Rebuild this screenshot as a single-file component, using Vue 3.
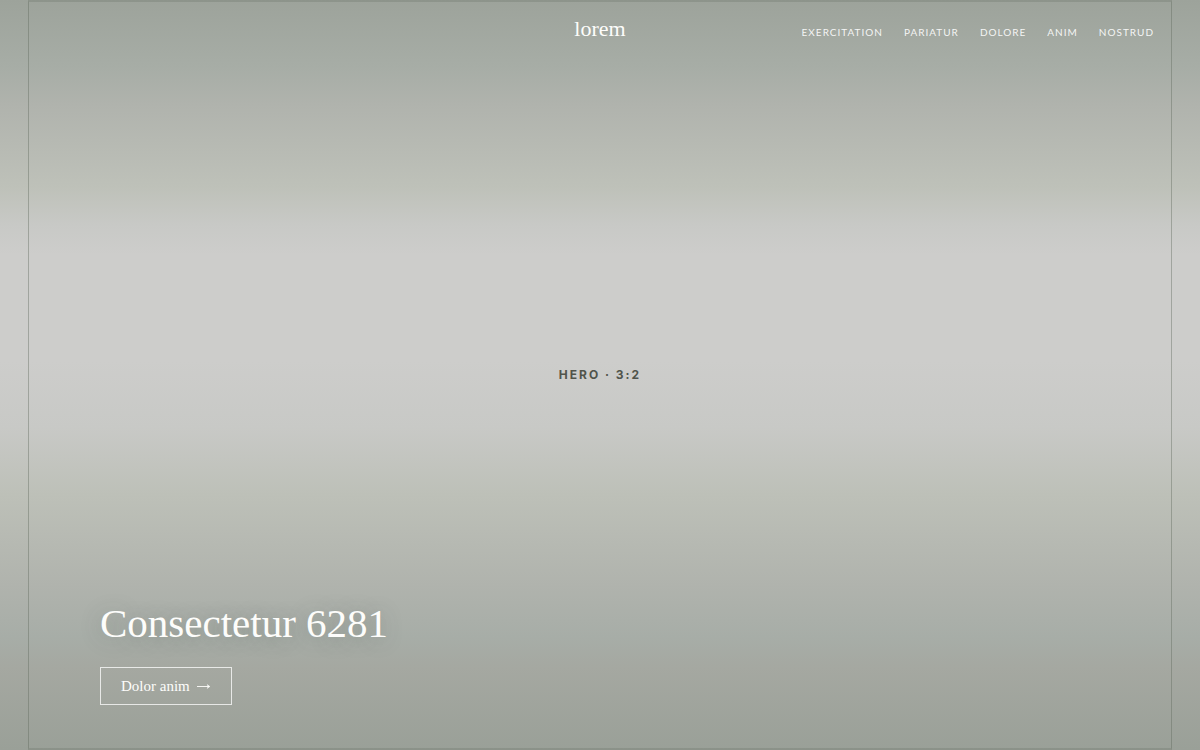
<script setup>
const links = ['Exercitation', 'Pariatur', 'Dolore', 'Anim', 'Nostrud']
</script>

<template>
  <main class="hero">
    <div class="frame">
      <span class="label">HERO · 3:2</span>
    </div>
    <header class="bar">
      <a class="brand" href="#">lorem</a>
      <nav class="nav" aria-label="Main">
        <a v-for="link in links" :key="link" href="#">{{ link }}</a>
      </nav>
    </header>
    <section class="copy">
      <h1>Consectetur 6281</h1>
      <a class="cta" href="#">
        <span>Dolor anim</span>
        <svg width="14" height="8" viewBox="0 0 14 8" fill="none" aria-hidden="true">
          <path d="M0 4.5H12" stroke="currentColor" stroke-width="0.9" />
          <path d="M9.8 2L13.2 4.5L9.8 7L10.8 4.5Z" fill="currentColor" />
        </svg>
      </a>
    </section>
  </main>
</template>

<style>
body {
  margin: 0;
}
</style>

<style scoped>
.hero {
  position: relative;
  display: flex;
  flex-direction: column;
  justify-content: space-between;
  min-height: 100vh;
  box-sizing: border-box;
  color: #fdfdfb;
  font-family: "Liberation Serif", serif;
  background: linear-gradient(
    180deg,
    #9da39b 0%,
    #a7ada6 9%,
    #b0b3ad 14%,
    #bec1b9 25%,
    #c8c9c6 30%,
    #cdcdcb 34%,
    #cdcdcb 48%,
    #c8c9c6 57%,
    #bdc0b8 66%,
    #b0b3ad 78%,
    #a7ada7 85%,
    #a5a8a1 89%,
    #9aa098 100%
  );
}

.frame {
  position: absolute;
  inset: 0 28px;
  display: flex;
  align-items: center;
  justify-content: center;
  border: solid rgba(95, 105, 92, 0.25);
  border-width: 2px 1px;
  border-left-color: rgba(95, 105, 92, 0.4);
  border-right-color: rgba(95, 105, 92, 0.4);
}

.label {
  color: #50544b;
  font: 700 12px/16px Inter, sans-serif;
  letter-spacing: 2px;
}

.bar {
  position: relative;
  display: grid;
  grid-template-columns: 1fr auto 1fr;
  align-items: center;
  padding: 15px 46px 0;
}

a {
  color: inherit;
  text-decoration: none;
}

.brand {
  grid-column: 2;
  font-size: 22px;
  line-height: 28px;
}

.nav {
  display: flex;
  justify-content: flex-end;
  gap: 21px;
  padding-top: 6px;
  color: rgba(255, 255, 255, 0.9);
  font: 400 10px/14px Lato, sans-serif;
  letter-spacing: 1px;
  text-transform: uppercase;
}

.copy {
  position: relative;
  padding: 0 100px 45px;
}

h1 {
  margin: 0 0 21px;
  font-size: 41px;
  font-weight: 400;
  line-height: 46px;
  text-shadow: 0 2px 20px rgba(70, 80, 70, 0.35);
}

.cta {
  display: inline-flex;
  align-items: center;
  gap: 7px;
  padding: 8px 20px;
  border: 1px solid rgba(255, 255, 255, 0.75);
  font-size: 15px;
  line-height: 20px;
}
</style>
